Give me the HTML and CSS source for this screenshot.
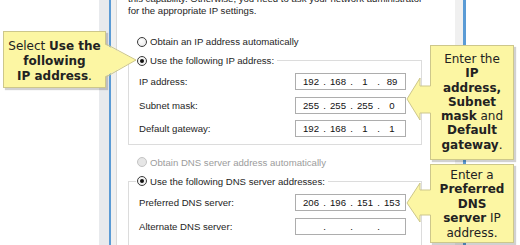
FILE: index.html
```html
<!DOCTYPE html>
<html lang="en">
<head>
  <meta charset="UTF-8" />
  <title>IP Settings</title>
  <link rel="stylesheet" href="styles.css">
</head>
<body>
  <div class="screen">
    <div class="window">
      <div class="frame-left"></div>
      <div class="dialog">
        <div class="page">
          <p class="intro">this capability. Otherwise, you need to ask your network administrator<br>for the appropriate IP settings.</p>

          <div class="radio first"><span class="mark"></span>Obtain an IP address automatically</div>

          <fieldset class="group">
            <legend class="radio checked"><span class="mark"></span>Use the following IP address:</legend>
            <div class="rows">
              <div class="field">
                <span class="label">IP address:</span>
                <span class="ip"><span class="oct">192</span><span class="sep">.</span><span class="oct">168</span><span class="sep">.</span><span class="oct">1</span><span class="sep">.</span><span class="oct">89</span></span>
              </div>
              <div class="field">
                <span class="label">Subnet mask:</span>
                <span class="ip"><span class="oct">255</span><span class="sep">.</span><span class="oct">255</span><span class="sep">.</span><span class="oct">255</span><span class="sep">.</span><span class="oct">0</span></span>
              </div>
              <div class="field">
                <span class="label">Default gateway:</span>
                <span class="ip"><span class="oct">192</span><span class="sep">.</span><span class="oct">168</span><span class="sep">.</span><span class="oct">1</span><span class="sep">.</span><span class="oct">1</span></span>
              </div>
            </div>
          </fieldset>

          <div class="radio disabled"><span class="mark"></span>Obtain DNS server address automatically</div>

          <fieldset class="group dns">
            <legend class="radio checked"><span class="mark"></span>Use the following DNS server addresses:</legend>
            <div class="rows">
              <div class="field">
                <span class="label">Preferred DNS server:</span>
                <span class="ip"><span class="oct">206</span><span class="sep">.</span><span class="oct">196</span><span class="sep">.</span><span class="oct">151</span><span class="sep">.</span><span class="oct">153</span></span>
              </div>
              <div class="field">
                <span class="label">Alternate DNS server:</span>
                <span class="ip"><span class="oct"></span><span class="sep">.</span><span class="oct"></span><span class="sep">.</span><span class="oct"></span><span class="sep">.</span><span class="oct"></span></span>
              </div>
            </div>
          </fieldset>
        </div>
      </div>
      <div class="frame-right"></div>
    </div>

    <div class="callout callout-left">Select <b>Use the</b><br><b>following</b><br><b>IP address</b>.</div>
    <div class="callout callout-ip">Enter the<br><b>IP</b><br><b>address,</b><br><b>Subnet</b><br><b>mask</b> and<br><b>Default</b><br><b>gateway</b>.</div>
    <div class="callout callout-dns">Enter a<br><b>Preferred</b><br><b>DNS</b><br><b>server</b> IP<br>address.</div>

    <!-- callout pointers -->
    <svg class="pointers" width="520" height="245" viewBox="0 0 520 245">
      <polygon class="fill" points="104,44 136,60 104,77" />
      <polyline class="edge" points="106,44 136,60 106,77" />
      <polygon class="fill" points="432,86 420,86 420,78 407,99 420,120 420,113 432,113" />
      <polyline class="edge" points="430.5,86 420,86 420,78 407,99 420,120 420,113 430.5,113" />
      <polygon class="fill" points="432,190 420,190 420,183 407,203 420,222 420,215 432,215" />
      <polyline class="edge" points="430.5,190 420,190 420,183 407,203 420,222 420,215 430.5,215" />
    </svg>
  </div>
</body>
</html>
```

FILE: styles.css
```css
body {
  margin: 0;
  background-color: #fff;
}

.screen {
  position: relative;
  width: 520px;
  height: 245px;
  overflow: hidden;
  font-family: "Liberation Sans", Arial, sans-serif;
  font-size: 9.6px;
  color: #1e1e1e;
}

.window {
  display: flex;
  height: 245px;
  margin-left: 99px;
}

.frame-left {
  width: 10px;
  background-color: #e8eaed;
  border-right: 2px solid #5b9bd5;
}

.frame-right {
  width: 3px;
  background-color: #5b9bd5;
}

.dialog {
  display: flex;
  background-color: #f0f0f0;
  padding: 0 8px 0 5px;
}

.page {
  width: 339px;
  background-color: #fff;
  border-left: 1px solid #dadada;
  padding-left: 11px;
  box-sizing: border-box;
}

.intro {
  margin: -7px 0 0;
  line-height: 12px;
  white-space: nowrap;
}

.radio {
  display: flex;
  align-items: center;
  height: 19px;
  white-space: nowrap;
}

.radio.first {
  margin: 15px 0 0 9px;
}

.radio.disabled {
  margin: 8px 0 0 9px;
  color: #9c9c9c;
}

.mark {
  position: relative;
  width: 10px;
  height: 10px;
  margin-right: 3px;
  border: 1px solid #3a3a3a;
  border-radius: 50%;
  background: radial-gradient(circle at 40% 40%, #fff, #e4e4e4);
  box-sizing: border-box;
}

.checked .mark:after {
  content: "";
  position: absolute;
  left: 2px;
  top: 2px;
  width: 4px;
  height: 4px;
  border-radius: 50%;
  background-color: #111;
}

.disabled .mark {
  border-color: #c4c4c4;
  background: #e6e6e6;
}

.group {
  width: 294px;
  margin: 0;
  padding: 3px 14px 6.5px 10px;
  border: 1px solid #dcdcdc;
  box-sizing: border-box;
}

.group legend {
  margin-left: -3px;
  padding: 0 3px 0 1px;
}

.group.dns {
  padding-top: 3.5px;
  padding-bottom: 10px;
}

.rows {
  display: flex;
  flex-direction: column;
  gap: 6.5px;
}

.field {
  display: flex;
  align-items: center;
  height: 17px;
}

.label {
  width: 156px;
}

.ip {
  display: flex;
  align-items: center;
  width: 111px;
  height: 17px;
  padding-left: 5px;
  border: 1px solid #adadad;
  box-sizing: border-box;
  color: #111;
}

.oct {
  width: 20px;
  text-align: center;
}

.sep {
  width: 7px;
  text-align: center;
}

.callout {
  position: absolute;
  box-sizing: border-box;
  background-color: #fcf6a3;
  border: 1px solid #cdc78b;
  box-shadow: 2px 2px 1px rgba(0,0,0,0.18);
  font-family: "DejaVu Sans", Verdana, sans-serif;
  font-size: 12px;
  color: #222;
  text-align: center;
}

.callout-left {
  left: 3px;
  top: 31px;
  width: 103px;
  height: 57px;
  padding-top: 7px;
  line-height: 15px;
}

.callout-ip {
  left: 430px;
  top: 45px;
  width: 84px;
  height: 115px;
  padding-top: 6px;
  line-height: 14.3px;
}

.callout-dns {
  left: 430px;
  top: 164px;
  width: 84px;
  height: 79px;
  padding-top: 3px;
  line-height: 14.4px;
}

.pointers {
  position: absolute;
  left: 0;
  top: 0;
}

.pointers .fill {
  fill: #fcf6a3;
}

.pointers .edge {
  fill: none;
  stroke: #cdc78b;
  stroke-width: 1;
}
```
